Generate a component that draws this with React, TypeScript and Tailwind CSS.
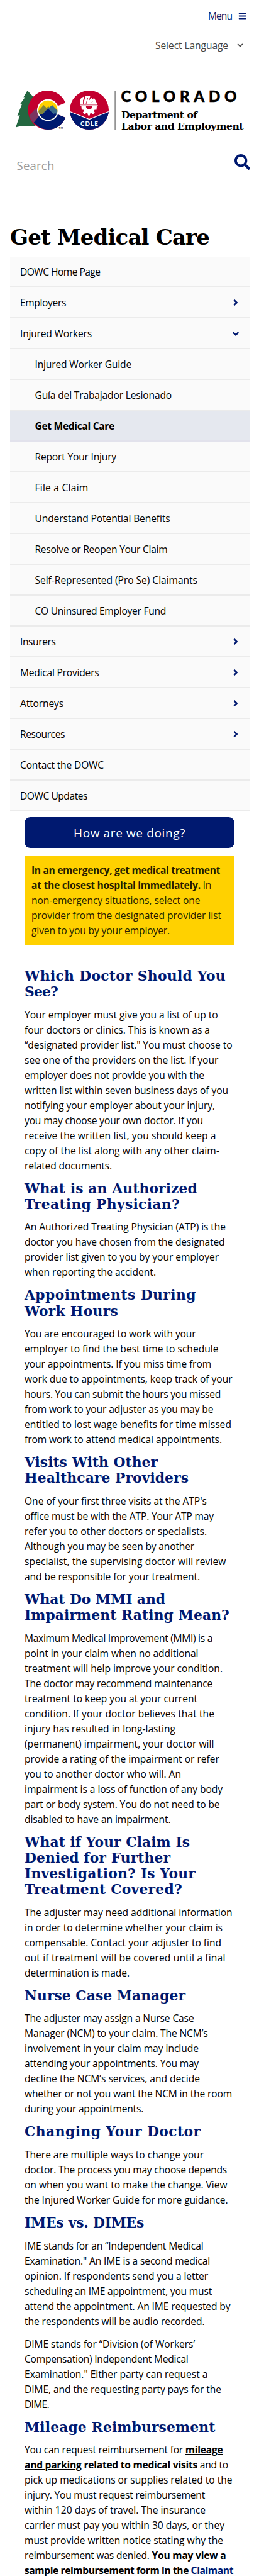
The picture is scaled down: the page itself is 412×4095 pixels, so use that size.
import React, { useLayoutEffect, useRef, useState } from 'react';
import { FaBars, FaSearch } from 'react-icons/fa';
import { ChevronDown } from 'lucide-react';

type LineData = [React.ReactNode, number];

/** One line of copy, tracked so that it fills the given measure. */
function Line({ w, children }: { w: number; children: React.ReactNode }) {
  const ref = useRef<HTMLSpanElement>(null);
  const [tracking, setTracking] = useState(0);
  useLayoutEffect(() => {
    const el = ref.current;
    if (!el) return;
    const n = (el.textContent || '').length;
    setTracking((w - el.getBoundingClientRect().width) / n);
  }, [w]);
  return (
    <span className="block whitespace-nowrap">
      <span ref={ref} style={{ letterSpacing: tracking }}>{children}</span>
    </span>
  );
}

function Lines({ lines }: { lines: LineData[] }) {
  return (
    <>
      {lines.map(([text, w], i) => (
        <Line key={i} w={w}>{text}</Line>
      ))}
    </>
  );
}

function Logo() {
  return (
    <svg viewBox="20 140 372 72" className="block h-[72px] w-[372px] overflow-visible">
      <defs>
        <clipPath id="disc"><circle cx="76.3" cy="175" r="15.2" /></clipPath>
        <clipPath id="seal"><circle cx="142" cy="175" r="31" /></clipPath>
      </defs>
      <path d="M43.6 144L37.4 154.5L40 154.2L31.8 165.8L35 165.4L27.6 184L31.6 183.2L25 202.4C32 200.4 40 199.6 56 201L60 160L53 154Z" fill="#236740" />
      <path d="M104.2 163.5A31 31 0 1 0 76.3 206C89 206 99.500 198.500 104.200 187L91 181.500A16.500 16.500 0 1 1 91.500 168.500Z" fill="#c3002f" />
      <path d="M53 193.500L66 180L76.3 175L91 181.500L104.2 187C99.500 198.500 89 206 76.300 206C67.500 206 59 201 53 193.500Z" fill="#001970" />
      <path d="M46.500 184L57 172L64 182L53.300 195.500C50 192 48 188.500 46.500 184Z" fill="#7b3560" />
      <circle cx="76.3" cy="175" r="17.300" fill="#fff" />
      <g clipPath="url(#disc)">
        <rect x="58" y="157" width="38" height="38" fill="#ffd100" />
        <path d="M58 180L69.500 167L74 171.500L77 169L96 190V195H58Z" fill="#82853a" />
        <path d="M70 178L83 167L96 180V195H65Z" fill="#3b6c8c" />
        <path d="M58 186L64 181L68 181.500L76.300 172.500L85 181L88 180L96 186V195H58Z" fill="#001970" />
      </g>
      <text x="93.500" y="205" textLength="6.500" fontSize="3.800" fontWeight="700" fontFamily="Lato, sans-serif" fill="#333">TM</text>

      <g clipPath="url(#seal)">
        <rect x="110" y="143" width="64" height="64" fill="#c3002f" />
        <path d="M110 177L142 189.500L174 177V208H110Z" fill="#001970" />
        <path d="M110 177L142 189.500L174 177" fill="none" stroke="#fff" strokeWidth="1.300" />
      </g>
      <path d="M127.800 164.500V157.500C129.500 155.500 131.500 154 134 153.200V160L136 152.600C138.500 152 141 152 143.500 152.800L141.500 160L145 155.500L147.500 158L149.500 155.500L152.500 160.500L155 166.500H127.800Z" fill="#fff" />
      <path d="M132.500 165V158.500M137 165L139.500 156M145.500 164L147 161" stroke="#c3002f" strokeWidth="0.900" fill="none" />
      <rect x="127.500" y="167.200" width="28.300" height="1.700" rx="0.800" fill="#fff" />
      <path d="M129.500 169H154L153.500 174.500H150.500L149.500 176.500L151 179.500L147.500 181.500L145 179.800L143.500 180.200L142.800 183.500H140L139.300 180.200L137.500 179.700L134.500 181.500L131.800 179L133.500 176.500L132.700 174.500H130Z" fill="#fff" />
      <path d="M136.800 169A5 5 0 0 0 146.800 169Z" fill="#c3002f" />
      <text x="128" y="199.500" textLength="27.800" fontSize="9.600" fontWeight="900" fontFamily="Lato, sans-serif" fill="#fff">CDLE</text>

      <rect x="182.300" y="144" width="1.600" height="62" fill="#8a8a8a" />
      <g fill="#000">
        <text x="192.500" y="161.600" textLength="184" fontSize="24" fontWeight="900" fontFamily="Lato, sans-serif" stroke="#000" strokeWidth="0.500">COLORADO</text>
        <text x="193" y="187.700" textLength="121" fontSize="15.600" fontWeight="700" fontFamily="'DejaVu Serif', serif">Department of</text>
        <text x="193" y="205.700" textLength="194.500" fontSize="15.600" fontWeight="700" fontFamily="'DejaVu Serif', serif">Labor and Employment</text>
      </g>
    </svg>
  );
}

type NavItem = { label: string; w: number; sub?: boolean; active?: boolean; icon?: 'right' | 'down' };
const nav: NavItem[] = [
  { label: 'DOWC Home Page', w: 127.5 },
  { label: 'Employers', w: 73, icon: 'right' },
  { label: 'Injured Workers', w: 114, icon: 'down' },
  { label: 'Injured Worker Guide', w: 153.5, sub: true },
  { label: 'Guía del Trabajador Lesionado', w: 217.5, sub: true },
  { label: 'Get Medical Care', w: 126.5, sub: true, active: true },
  { label: 'Report Your Injury', w: 129.5, sub: true },
  { label: 'File a Claim', w: 85, sub: true },
  { label: 'Understand Potential Benefits', w: 215, sub: true },
  { label: 'Resolve or Reopen Your Claim', w: 211, sub: true },
  { label: 'Self-Represented (Pro Se) Claimants', w: 258.5, sub: true },
  { label: 'CO Uninsured Employer Fund', w: 208.5, sub: true },
  { label: 'Insurers', w: 56.5, icon: 'right' },
  { label: 'Medical Providers', w: 125.5, icon: 'right' },
  { label: 'Attorneys', w: 69, icon: 'right' },
  { label: 'Resources', w: 71, icon: 'right' },
  { label: 'Contact the DOWC', w: 133 },
  { label: 'DOWC Updates', w: 107 },
];

function NavRow({ item }: { item: NavItem }) {
  return (
    <li
      className={
        'flex h-[49px] items-center justify-between border-b-2 pr-[17px] ' +
        (item.active ? 'border-[#e2e2ec] bg-[#e5e8ef] font-bold ' : 'border-[#ebebeb] bg-[#fafafa] ') +
        (item.sub ? 'pl-[40px]' : 'pl-[16.5px]')
      }
    >
      <Line w={item.w}>{item.label}</Line>
      {item.icon && (
        <svg viewBox="0 0 12 12" className="size-3" fill="none" stroke="#001970" strokeWidth="2.6">
          <path d={item.icon === 'right' ? 'M3.400 1.800L7.600 6L3.400 10.200' : 'M1.600 4.200L6 8.200L10.400 4.200'} />
        </svg>
      )}
    </li>
  );
}

const sections: { title: LineData[]; paras: LineData[][] }[] = [
  {
    title: [['Which Doctor Should You', 320], ['See?', 53]],
    paras: [[
      ['Your employer must give you a list of up to', 307.5],
      ['four doctors or clinics. This is known as a', 295],
      ['“designated provider list." You must choose to', 330.5],
      ['see one of the providers on the list. If your', 308.5],
      ['employer does not provide you with the', 286],
      ['written list within seven business days of you', 324],
      ['notifying your employer about your injury,', 303],
      ['you may choose your own doctor. If you', 284],
      ['receive the written list, you should keep a', 304.5],
      ['copy of the list along with any other claim-', 310],
      ['related documents.', 139],
    ]],
  },
  {
    title: [['What is an Authorized', 275], ['Treating Physician?', 247]],
    paras: [[
      ['An Authorized Treating Physician (ATP) is the', 320],
      ['doctor you have chosen from the designated', 318.5],
      ['provider list given to you by your employer', 309],
      ['when reporting the accident.', 209],
    ]],
  },
  {
    title: [['Appointments During', 273], ['Work Hours', 149]],
    paras: [[
      ['You are encouraged to work with your', 272.5],
      ['employer to find the best time to schedule', 308.5],
      ['your appointments. If you miss time from', 297],
      ['work due to appointments, keep track of your', 330.5],
      ['hours. You can submit the hours you missed', 312],
      ['from work to your adjuster as you may be', 300.5],
      ['entitled to lost wage benefits for time missed', 329],
      ['from work to attend medical appointments.', 314],
    ]],
  },
  {
    title: [['Visits With Other', 212], ['Healthcare Providers', 261]],
    paras: [[
      ["One of your first three visits at the ATP's", 290],
      ['office must be with the ATP. Your ATP may', 301],
      ['refer you to other doctors or specialists.', 290],
      ['Although you may be seen by another', 270],
      ['specialist, the supervising doctor will review', 320.5],
      ['and be responsible for your treatment.', 279],
    ]],
  },
  {
    title: [['What Do MMI and', 224], ['Impairment Rating Mean?', 326]],
    paras: [[
      ['Maximum Medical Improvement (MMI) is a', 299],
      ['point in your claim when no additional', 276.5],
      ['treatment will help improve your condition.', 315],
      ['The doctor may recommend maintenance', 299],
      ['treatment to keep you at your current', 275],
      ['condition. If your doctor believes that the', 302],
      ['injury has resulted in long-lasting', 240],
      ['(permanent) impairment, your doctor will', 301.5],
      ['provide a rating of the impairment or refer', 310],
      ['you to another doctor who will. An', 249],
      ['impairment is a loss of function of any body', 315],
      ['part or body system. You do not need to be', 310.5],
      ['disabled to have an impairment.', 232.5],
    ]],
  },
  {
    title: [['What if Your Claim Is', 263], ['Denied for Further', 232], ['Investigation? Is Your', 272], ['Treatment Covered?', 251]],
    paras: [[
      ['The adjuster may need additional information', 330.5],
      ['in order to determine whether your claim is', 315],
      ['compensable. Contact your adjuster to find', 313],
      ['out if treatment will be covered until a final', 319.5],
      ['determination is made.', 167],
    ]],
  },
  {
    title: [['Nurse Case Manager', 256]],
    paras: [[
      ['The adjuster may assign a Nurse Case', 269.5],
      ['Manager (NCM) to your claim. The NCM’s', 291.5],
      ['involvement in your claim may include', 277],
      ['attending your appointments. You may', 277],
      ['decline the NCM’s services, and decide', 279],
      ['whether or not you want the NCM in the room', 330],
      ['during your appointments.', 189],
    ]],
  },
  {
    title: [['Changing Your Doctor', 280.5]],
    paras: [[
      ['There are multiple ways to change your', 285],
      ['doctor. The process you may choose depends', 322],
      ['on when you want to make the change. View', 322.5],
      ['the Injured Worker Guide for more guidance.', 323.5],
    ]],
  },
  {
    title: [['IMEs vs. DIMEs', 190]],
    paras: [
      [
        ['IME stands for an “Independent Medical', 284.5],
        ['Examination." An IME is a second medical', 295],
        ['opinion. If respondents send you a letter', 292],
        ['scheduling an IME appointment, you must', 298],
        ['attend the appointment. An IME requested by', 327.5],
        ['the respondents will be audio recorded.', 286.5],
      ],
      [
        ['DIME stands for “Division (of Workers’', 271],
        ['Compensation) Independent Medical', 260.5],
        ['Examination." Either party can request a', 291.5],
        ['DIME, and the requesting party pays for the', 313],
        ['DIME.', 39],
      ],
    ],
  },
  {
    title: [['Mileage Reimbursement', 303.5]],
    paras: [[
      [<>You can request reimbursement for <b className="underline">mileage</b></>, 315.5],
      [<><b><span className="underline">and parking</span> related to medical visits</b> and to</>, 324],
      ['pick up medications or supplies related to the', 330.5],
      ['injury. You must request reimbursement', 287],
      ['within 120 days of travel. The insurance', 288],
      ['carrier must pay you within 30 days, or they', 318],
      ['must provide written notice stating why the', 316],
      [<>reimbursement was denied. <b>You may view a</b></>, 320.5],
      [<b>sample reimbursement form in the <a className="text-[#001970] underline">Claimant</a></b>, 332],
    ]],
  },
];

export default function App() {
  return (
    <div className="flex h-[4095px] w-[412px] flex-col overflow-hidden bg-white font-['Open_Sans','Noto_Sans',sans-serif] text-[15.6px] leading-6 text-black">
      <header className="flex flex-col">
        <div className="flex h-[50px] items-center justify-end gap-[9.5px] pr-[20.5px] text-[#001970]">
          <Line w={38}>Menu</Line>
          <FaBars className="size-[13px]" />
        </div>
        <div className="flex h-[44px] items-center justify-end gap-3 pr-[23px] text-[#444]">
          <Line w={116}>Select Language</Line>
          <ChevronDown size={14} strokeWidth={2.8} />
        </div>
        <div className="mt-[46px] pl-5">
          <Logo />
        </div>
        <div className="mt-[31px] flex h-[40px] justify-between pl-[26.5px] pr-[14.5px]">
          <span className="pt-2 text-[18.5px] text-[#999]"><Line w={60}>Search</Line></span>
          <FaSearch className="mt-0.5 size-[25px] text-[#001970]" />
        </div>
      </header>

      <h1 className="mt-[72px] pl-4 font-['DejaVu_Serif',serif] text-[34px] font-bold leading-[44px]">
        <Line w={317}>Get Medical Care</Line>
      </h1>

      <ul className="ml-[15.5px] mt-[9px] flex w-[382px] flex-col">
        {nav.map((item) => <NavRow key={item.label} item={item} />)}
      </ul>

      <main className="flex flex-col px-[39px] pt-[9px]">
        <div className="flex h-[49px] items-center justify-center rounded-[9px] bg-[#001970] text-[19px] text-white">
          <Line w={178}>How are we doing?</Line>
        </div>
        <div className="mt-3 h-[141.5px] bg-[#ffd100] px-[11px] pt-[11px] text-[#241c00]">
          <Lines
            lines={[
              [<b>In an emergency, get medical treatment</b>, 300],
              [<><b>at the closest hospital immediately.</b> In</>, 286],
              ['non-emergency situations, select one', 268.5],
              ['provider from the designated provider list', 302],
              ['given to you by your employer.', 220],
            ]}
          />
        </div>
        <div className="mt-[37.3px] flex flex-col">
          {sections.map((s, i) => (
            <section key={i}>
              <h2 className="mb-[11.44px] font-['DejaVu_Serif',serif] text-[21.8px] font-bold leading-[25.17px] text-[#001970]">
                <Lines lines={s.title} />
              </h2>
              {s.paras.map((p, j) => (
                <p key={j} className="mb-3"><Lines lines={p} /></p>
              ))}
            </section>
          ))}
        </div>
      </main>
    </div>
  );
}
